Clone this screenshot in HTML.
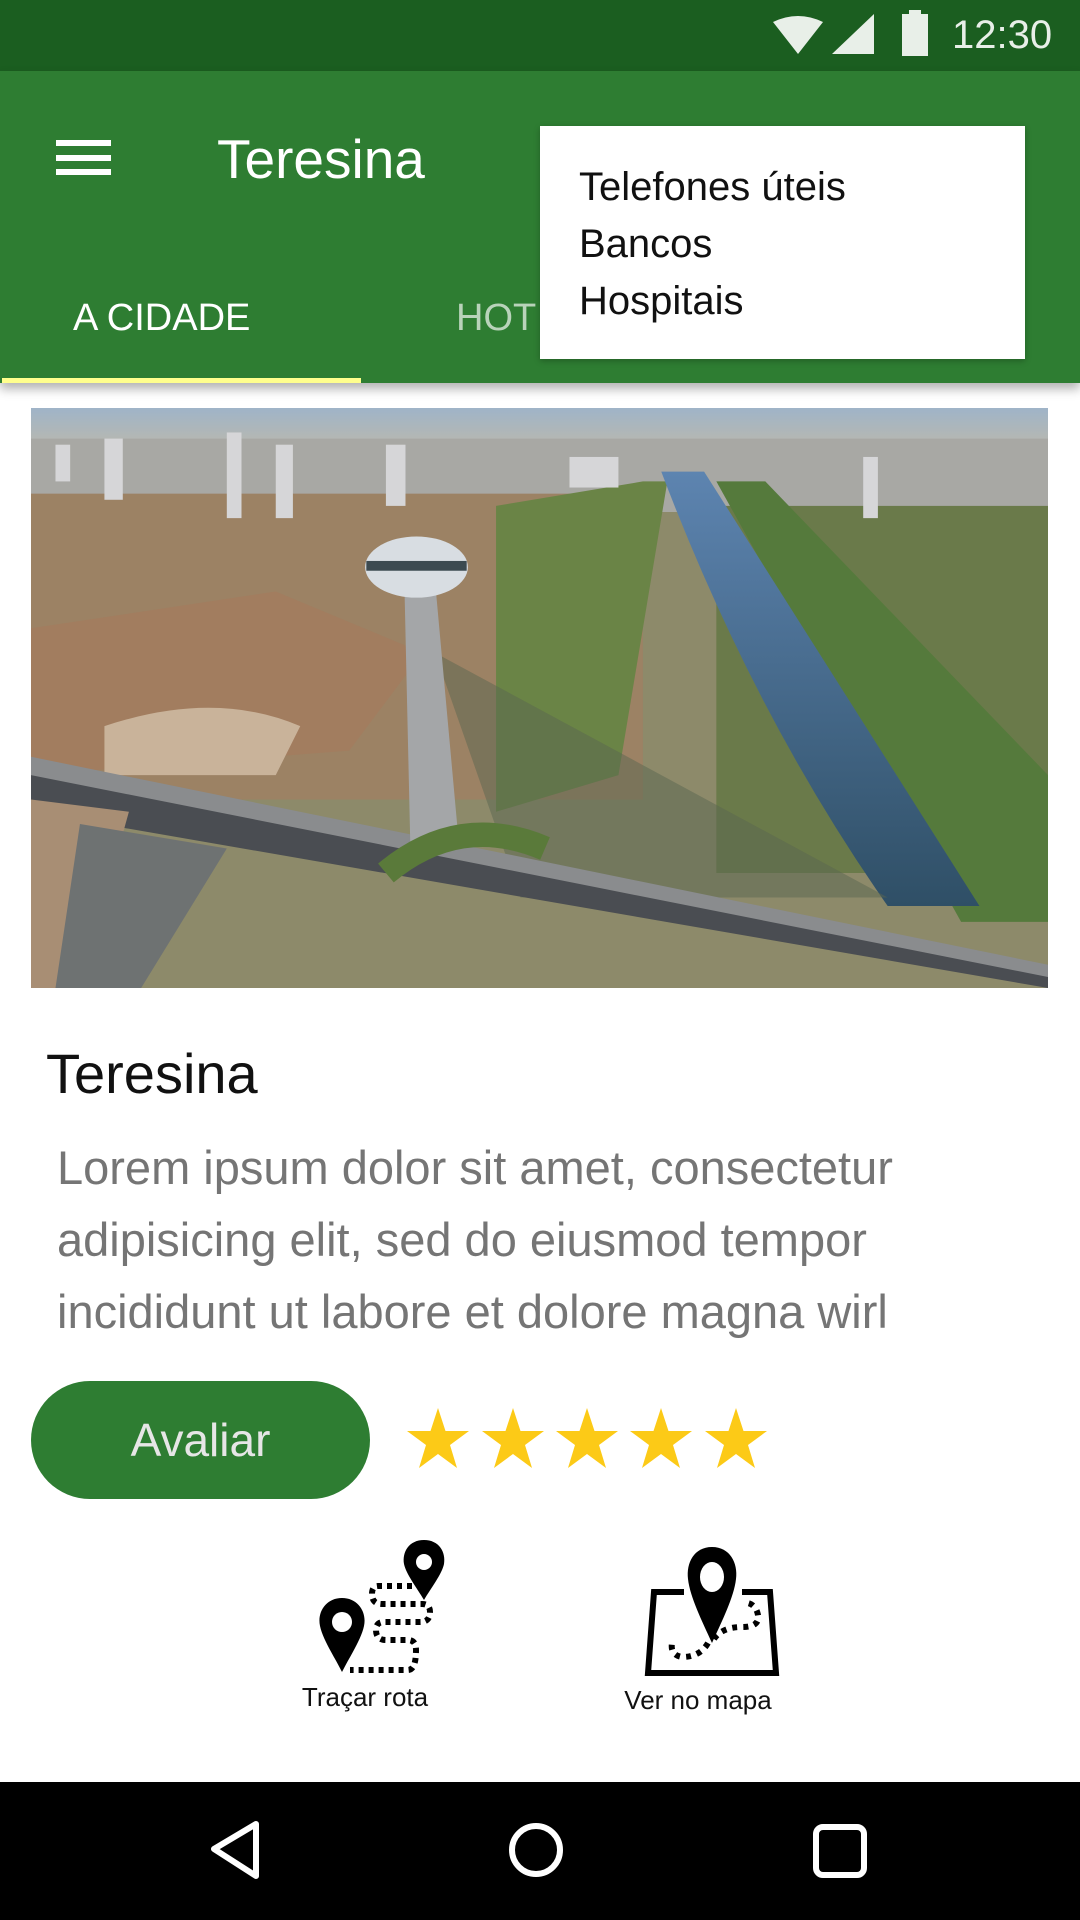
<!DOCTYPE html>
<html><head><meta charset="utf-8"><style>
*{margin:0;padding:0;box-sizing:border-box}
body{width:1080px;height:1920px;background:#fff;position:relative;overflow:hidden;font-family:"Liberation Sans",sans-serif}
.abs{position:absolute}
</style></head><body>
<div class="abs" style="left:0;top:0;width:1080px;height:71px;background:#1b5e20"></div>
<svg class="abs" style="left:770px;top:14px" width="110" height="42" viewBox="0 0 110 42">
<path d="M3 8 Q28 -4 53 8 L28 40 Z" fill="#e8efe8"/>
<path d="M62 40 L104 40 L104 0 Z" fill="#e8efe8"/>
</svg>
<div class="abs" style="left:902px;top:14px;width:26px;height:42px;background:#e8efe8"></div>
<div class="abs" style="left:909px;top:10px;width:12px;height:6px;background:#e8efe8"></div>
<div class="abs" style="left:952px;top:12px;color:#e8efe8;font-size:40px;line-height:46px">12:30</div>

<div class="abs" style="left:0;top:71px;width:1080px;height:312px;background:#2e7d32;box-shadow:0 6px 10px rgba(0,0,0,.3)"></div>
<div class="abs" style="left:56px;top:140px;width:55px;height:6px;background:#fff"></div>
<div class="abs" style="left:56px;top:155px;width:55px;height:6px;background:#fff"></div>
<div class="abs" style="left:56px;top:169px;width:55px;height:6px;background:#fff"></div>
<div class="abs" style="left:217px;top:127px;color:#fff;font-size:55px;line-height:64px">Teresina</div>
<div class="abs" style="left:73px;top:296px;color:#fff;font-size:38px;line-height:44px">A CIDADE</div>
<div class="abs" style="left:456px;top:296px;color:#b9d3ba;font-size:38px;line-height:44px">HOT</div>
<div class="abs" style="left:2px;top:378px;width:359px;height:5px;background:#ffff8d"></div>
<div class="abs" style="left:540px;top:126px;width:485px;height:233px;background:#fff;box-shadow:0 2px 6px rgba(0,0,0,.25)"></div>
<div class="abs" style="left:579px;top:159px;color:#111;font-size:40px;line-height:57px">Telefones úteis<br>Bancos<br>Hospitais</div>

<svg class="abs" style="left:31px;top:408px" width="1017" height="580" viewBox="0 0 831 474" preserveAspectRatio="none">
<defs>
<linearGradient id="sky" x1="0" y1="0" x2="0" y2="1"><stop offset="0" stop-color="#9fb4c8"/><stop offset="1" stop-color="#b8b8b0"/></linearGradient>
<linearGradient id="riv" x1="0" y1="0" x2="0" y2="1"><stop offset="0" stop-color="#5d84b0"/><stop offset="1" stop-color="#2f4f66"/></linearGradient>
</defs>
<rect width="831" height="474" fill="#8d8a6a"/>
<rect width="831" height="30" fill="url(#sky)"/>
<rect y="25" width="831" height="60" fill="#a8a8a4"/>
<rect x="0" y="70" width="500" height="250" fill="#9c8264"/>
<rect x="560" y="80" width="271" height="300" fill="#6a7a4a"/>
<path d="M380 80 L500 60 L520 60 L480 300 L380 330 Z" fill="#6a8446"/>
<path d="M560 60 L600 60 L831 300 L831 420 L760 420 Z" fill="#557a3c"/>
<path d="M0 180 L200 150 L320 200 L260 280 L0 300 Z" fill="#a77a5c" opacity=".6"/>
<path d="M60 260 Q150 230 220 260 L200 300 L60 300 Z" fill="#c9b39a"/>
<g fill="#d6d6d8">
<rect x="60" y="25" width="15" height="50"/><rect x="160" y="20" width="12" height="70"/><rect x="200" y="30" width="14" height="60"/><rect x="290" y="30" width="16" height="50"/><rect x="440" y="40" width="40" height="25"/><rect x="680" y="40" width="12" height="50"/><rect x="20" y="30" width="12" height="30"/>
</g>
<path d="M515 52 L550 52 L775 407 L700 407 Q590 250 515 52 Z" fill="url(#riv)"/>
<path d="M330 200 L700 400 L400 400 Z" fill="#5a6650" opacity=".5"/>
<path d="M0 285 L0 320 L831 474 L831 455 Z" fill="#8a8c8e"/>
<path d="M0 300 L831 465 L831 474 L0 330 Z" fill="#4a4d52"/>
<path d="M0 320 L80 330 L40 474 L0 474 Z" fill="#a88e74"/>
<path d="M40 340 L160 360 L90 474 L20 474 Z" fill="#6e7272"/>
<path d="M310 360 L305 140 L330 140 L350 360 Z" fill="#a4a6a8"/>
<ellipse cx="315" cy="130" rx="42" ry="25" fill="#d8dde2"/>
<rect x="274" y="125" width="82" height="8" fill="#3c4a50"/>
<path d="M290 380 Q350 330 420 360" stroke="#5a7a3a" stroke-width="20" fill="none"/>
</svg>

<div class="abs" style="left:46px;top:1040px;color:#111;font-size:56px;line-height:68px">Teresina</div>
<div class="abs" style="left:57px;top:1132px;color:#757575;font-size:47px;line-height:72px;width:1020px;white-space:nowrap">Lorem ipsum dolor sit amet, consectetur<br>adipisicing elit, sed do eiusmod tempor<br>incididunt ut labore et dolore magna wirl</div>

<div class="abs" style="left:31px;top:1381px;width:339px;height:118px;border-radius:59px;background:#2e7d32;color:#e6e6e6;font-size:46px;line-height:118px;text-align:center">Avaliar</div>
<svg class="abs" style="left:406px;top:1408px" width="370" height="66" viewBox="0 0 370 66">
<defs><path id="st" d="M31 0 L38.5 23 L62 23 L43 37 L50 60 L31 46 L12 60 L19 37 L0 23 L23.5 23 Z" fill="#fcca17"/></defs>
<use href="#st" x="1"/><use href="#st" x="76"/><use href="#st" x="150"/><use href="#st" x="224"/><use href="#st" x="299"/>
</svg>

<svg class="abs" style="left:312px;top:1538px" width="140" height="140" viewBox="0 0 140 140">
<path d="M112 2 C97 2 90 14 92 26 C94 36 105 50 112 62 C119 50 130 36 132 26 C134 14 127 2 112 2 Z" fill="#000"/>
<circle cx="112" cy="24" r="8" fill="#fff"/>
<path d="M30 60 C14 60 5 74 8 88 C11 102 22 118 30 134 C38 118 49 102 52 88 C55 74 46 60 30 60 Z" fill="#000"/>
<circle cx="30" cy="84" r="10" fill="#fff"/>
<path d="M100 48 L66 48 Q60 48 60 56 Q60 66 70 66 L110 66 Q118 66 118 74 Q118 84 108 84 L72 84 Q64 84 64 92 Q64 102 74 102 L96 102 Q104 102 104 112 Q104 132 96 132 L38 132" stroke="#000" stroke-width="6" stroke-dasharray="5 5" fill="none"/>
</svg>
<svg class="abs" style="left:642px;top:1545px" width="140" height="135" viewBox="0 0 140 135">
<path d="M42 47 L12 47 L6 128 L134 128 L128 47 L100 47" stroke="#000" stroke-width="6" fill="none"/>
<path d="M70 2 C52 2 44 18 46 34 C48 52 60 76 70 98 C80 76 92 52 94 34 C96 18 88 2 70 2 Z" fill="#000"/>
<ellipse cx="70" cy="32" rx="12" ry="15" fill="#fff"/>
<path d="M72 94 Q80 82 100 82 Q118 82 116 70 Q114 60 106 58 M66 98 Q58 112 40 112 Q28 110 30 98" stroke="#000" stroke-width="6" stroke-dasharray="5 6" fill="none"/>
</svg>
<div class="abs" style="left:265px;top:1680px;width:200px;text-align:center;color:#111;font-size:26px;line-height:34px">Traçar rota</div>
<div class="abs" style="left:598px;top:1683px;width:200px;text-align:center;color:#111;font-size:26px;line-height:34px">Ver no mapa</div>

<div class="abs" style="left:0;top:1782px;width:1080px;height:138px;background:#000"></div>
<svg class="abs" style="left:0;top:1782px" width="1080" height="138" viewBox="0 0 1080 138">
<path d="M256 42 L214 67 L256 94 Z" stroke="#fff" stroke-width="6" stroke-linejoin="round" fill="none"/>
<ellipse cx="536" cy="68" rx="24" ry="24" stroke="#fff" stroke-width="6" fill="none"/>
<rect x="816" y="45" width="48" height="48" rx="7" stroke="#fff" stroke-width="6" fill="none"/>
</svg>
</body></html>
